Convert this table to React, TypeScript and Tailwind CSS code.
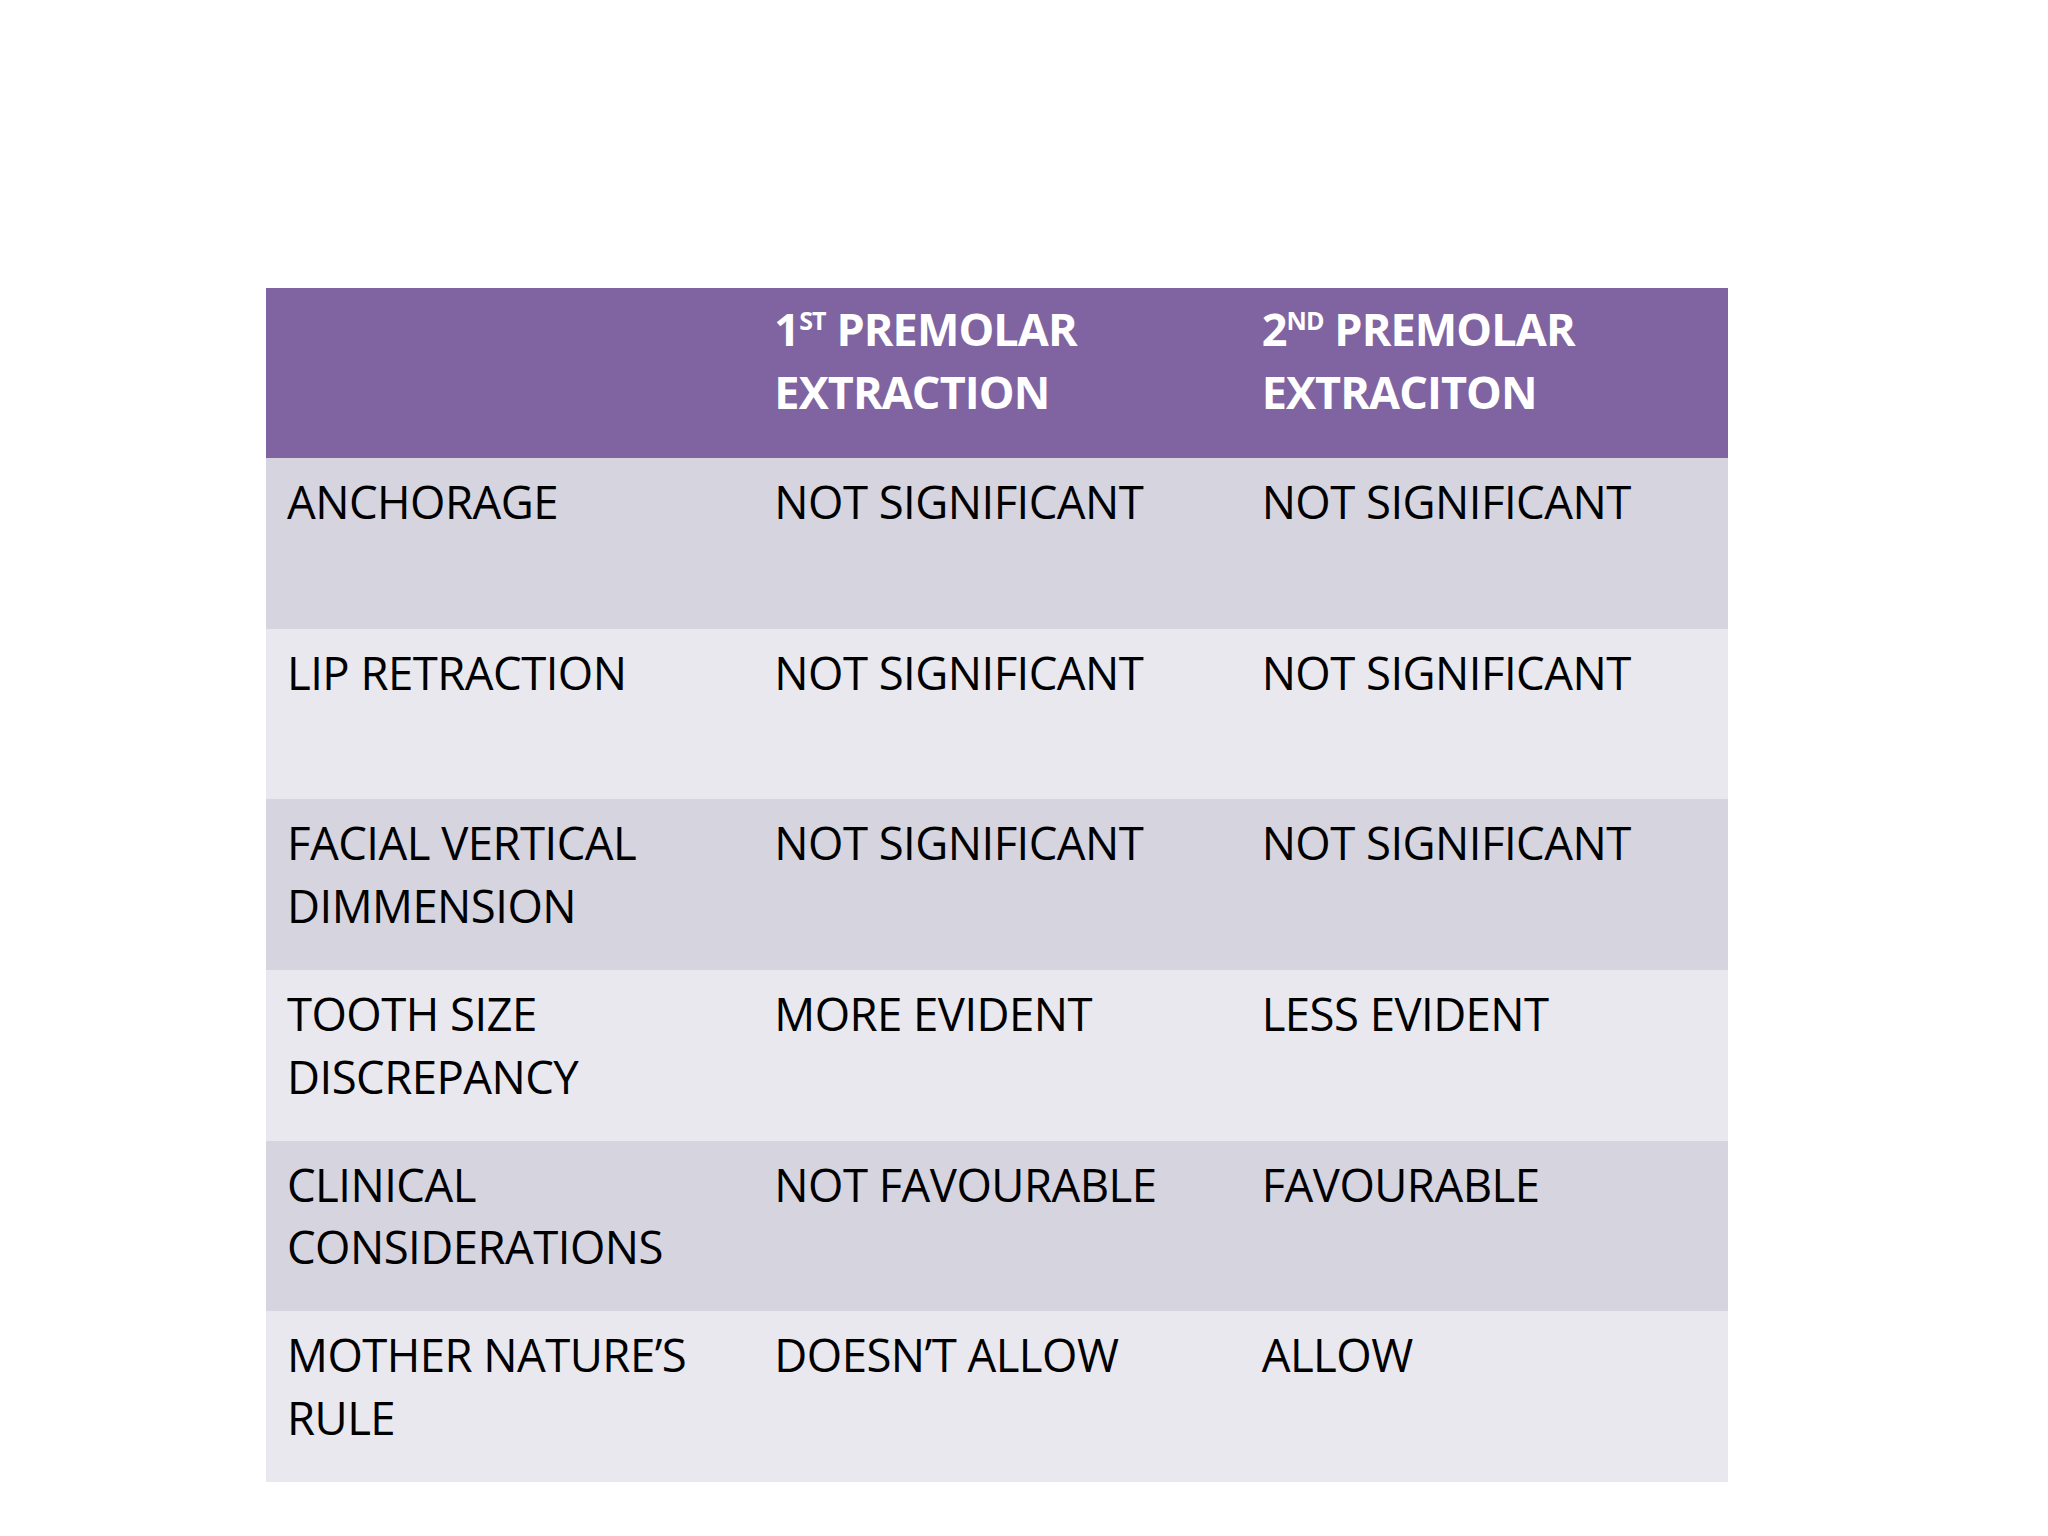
import type { ReactNode } from "react";

interface Row {
  label: ReactNode;
  first: string;
  second: string;
}

const rows: Row[] = [
  { label: "ANCHORAGE", first: "NOT SIGNIFICANT", second: "NOT SIGNIFICANT" },
  { label: "LIP RETRACTION", first: "NOT SIGNIFICANT", second: "NOT SIGNIFICANT" },
  {
    label: (
      <>
        FACIAL VERTICAL
        <br />
        DIMMENSION
      </>
    ),
    first: "NOT SIGNIFICANT",
    second: "NOT SIGNIFICANT",
  },
  {
    label: (
      <>
        TOOTH SIZE
        <br />
        DISCREPANCY
      </>
    ),
    first: "MORE EVIDENT",
    second: "LESS EVIDENT",
  },
  {
    label: (
      <>
        CLINICAL
        <br />
        CONSIDERATIONS
      </>
    ),
    first: "NOT FAVOURABLE",
    second: "FAVOURABLE",
  },
  {
    label: (
      <>
        MOTHER NATURE’S
        <br />
        RULE
      </>
    ),
    first: "DOESN’T ALLOW",
    second: "ALLOW",
  },
];

function HeadCell({ num, sup, word }: { num: string; sup: string; word: string }) {
  return (
    <div className="pl-[21px] pt-[10px]">
      {num}
      <sup className="text-[25px] top-[-16px]">{sup}</sup> PREMOLAR
      <br />
      {word}
    </div>
  );
}

export default function App() {
  return (
    <div className="w-[2048px] h-[1536px] bg-white pt-[288px] pl-[266px] font-['Open_Sans',sans-serif]">
      <div className="w-[1462px] flex flex-col">
        <div className="grid grid-cols-3 h-[170px] bg-[#8064a2] text-white font-bold text-[45px] leading-[62.5px] tracking-[-0.02em]">
          <div />
          <HeadCell num="1" sup="ST" word="EXTRACTION" />
          <HeadCell num="2" sup="ND" word="EXTRACITON" />
        </div>
        {rows.map((row, i) => (
          <div
            key={i}
            className={`grid grid-cols-3 h-[170.7px] text-black text-[45.5px] leading-[62.7px] tracking-[-0.012em] ${
              i % 2 === 0 ? "bg-[#d5d4df]" : "bg-[#e9e8ee]"
            }`}
          >
            <div className="pl-[21px] pt-[12px]">{row.label}</div>
            <div className="pl-[21px] pt-[12px]">{row.first}</div>
            <div className="pl-[21px] pt-[12px]">{row.second}</div>
          </div>
        ))}
      </div>
    </div>
  );
}
